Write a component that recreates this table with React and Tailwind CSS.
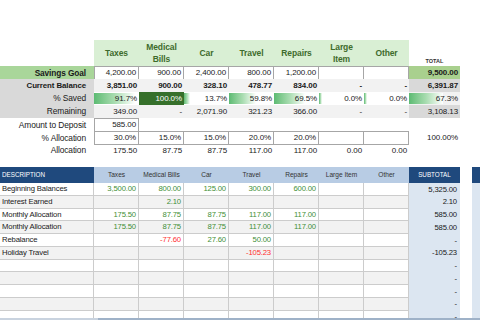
import React from 'react';

const COLS = 'grid grid-cols-[94px_repeat(7,45px)_51px_12px_1fr]';
const FONT = { fontFamily: '"Liberation Sans", Arial, sans-serif' };

const headers = [['Taxes'], ['Medical', 'Bills'], ['Car'], ['Travel'], ['Repairs'], ['Large', 'Item'], ['Other']];

function Num({ children, className = '' }) {
  return (
    <div className={`flex items-center justify-end pr-[2px] ${className}`}>{children}</div>
  );
}

function BarCell({ pct, text, className = '' }) {
  return (
    <div className={`relative flex items-center justify-end pr-[2px] ${className}`}>
      <div
        className="absolute left-0 top-[1px] bottom-[1px] min-w-[3px] bg-linear-to-r from-[#5cbb73] via-[#a8dcb0] to-white"
        style={{ width: `${pct}%` }}
      />
      <span className="relative">{text}</span>
    </div>
  );
}

const saved = [
  [91.7, '91.7%'],
  [100, '100.0%'],
  [13.7, '13.7%'],
  [59.8, '59.8%'],
  [69.5, '69.5%'],
  [0, '0.0%'],
  [0, '0.0%'],
];

const bottomHeaders = ['Taxes', 'Medical Bills', 'Car', 'Travel', 'Repairs', 'Large Item', 'Other'];

const alloc = [['175.50', 'g'], ['87.75', 'g'], ['87.75', 'g'], ['117.00', 'g'], ['117.00', 'g'], null, null];
const empty = [null, null, null, null, null, null, null];
const bottomRows = [
  { d: 'Beginning Balances', v: [['3,500.00', 'g'], ['800.00', 'g'], ['125.00', 'g'], ['300.00', 'g'], ['600.00', 'g'], null, null], s: '5,325.00' },
  { d: 'Interest Earned', v: [null, ['2.10', 'g'], null, null, null, null, null], s: '2.10' },
  { d: 'Monthly Allocation', v: alloc, s: '585.00' },
  { d: 'Monthly Allocation', v: alloc, s: '585.00' },
  { d: 'Rebalance', v: [null, ['-77.60', 'r'], ['27.60', 'g'], ['50.00', 'g'], null, null, null], s: '-' },
  { d: 'Holiday Travel', v: [null, null, null, ['-105.23', 'r'], null, null, null], s: '-105.23' },
  { d: '', v: empty, s: '-' },
  { d: '', v: empty, s: '-' },
  { d: '', v: empty, s: '-' },
  { d: '', v: empty, s: '-' },
  { d: '', v: empty, s: '-' },
];

export default function App() {
  return (
    <div className="w-[480px] h-[320px] overflow-hidden bg-white text-[#1a1a1a] flex flex-col" style={FONT}>
      {/* Top table */}
      <div className="mt-[40px] text-[8px] tracking-[-0.1px]">
        {/* header */}
        <div className={`${COLS} h-[26px]`}>
          <div />
          {headers.map((h, i) => (
            <div key={i} className="bg-[#d9efd4] flex flex-col items-center justify-center text-[8.5px] font-bold leading-[12px] text-[#3e6b2c]">
              {h.map((l) => (
                <span key={l}>{l}</span>
              ))}
            </div>
          ))}
          <div className="flex items-end justify-center pb-[1px] text-[5.5px] font-bold text-[#333] tracking-normal">TOTAL</div>
          <div />
          <div />
        </div>
        {/* Savings Goal */}
        <div className={`${COLS} h-[13px]`}>
          <div className="bg-[#a9d69a] flex items-center justify-end pr-[8px] font-bold text-[8.3px]">Savings Goal</div>
          {['4,200.00', '900.00', '2,400.00', '800.00', '1,200.00', '', ''].map((v, i) => (
            <Num key={i} className={`border-y border-r border-[#a6a6a6] ${i === 0 ? 'border-l' : ''}`}>{v}</Num>
          ))}
          <Num className="bg-[#a9d08e] font-bold">9,500.00</Num>
          <div />
          <div />
        </div>
        {/* Current Balance */}
        <div className={`${COLS} h-[13px]`}>
          <div className="bg-[#d9d9d9] flex items-center justify-end pr-[8px] font-bold text-[7.9px]">Current Balance</div>
          {['3,851.00', '900.00', '328.10', '478.77', '834.00', '-', '-'].map((v, i) => (
            <Num key={i} className="bg-[#f2f2f2] font-bold">{v}</Num>
          ))}
          <Num className="bg-[#d9d9d9] font-bold">6,391.87</Num>
          <div />
          <div />
        </div>
        {/* % Saved */}
        <div className={`${COLS} h-[13px]`}>
          <div className="bg-[#d9d9d9] flex items-center justify-end pr-[8px] text-[8.4px]">% Saved</div>
          {saved.map(([p, t], i) =>
            p === 100 ? (
              <Num key={i} className="bg-[#36702b] text-white">{t}</Num>
            ) : (
              <BarCell key={i} pct={p} text={t} />
            )
          )}
          <BarCell pct={67.3} text="67.3%" className="bg-[#f2f2f2]" />
          <div />
          <div />
        </div>
        {/* Remaining */}
        <div className={`${COLS} h-[13px]`}>
          <div className="bg-[#d9d9d9] flex items-center justify-end pr-[8px] text-[8.4px]">Remaining</div>
          {['349.00', '-', '2,071.90', '321.23', '366.00', '-', '-'].map((v, i) => (
            <Num key={i} className="bg-[#f2f2f2]">{v}</Num>
          ))}
          <Num className="bg-[#d9d9d9]">3,108.13</Num>
          <div />
          <div />
        </div>
        {/* Amount to Deposit */}
        <div className={`${COLS} h-[13px]`}>
          <div className="flex items-center justify-end pr-[8px] text-[8.4px]">Amount to Deposit</div>
          <Num className="border border-[#a6a6a6]">585.00</Num>
        </div>
        {/* % Allocation */}
        <div className={`${COLS} h-[13px]`}>
          <div className="flex items-center justify-end pr-[8px] text-[8.4px]">% Allocation</div>
          {['30.0%', '15.0%', '15.0%', '20.0%', '20.0%', '', ''].map((v, i) => (
            <Num key={i} className={`border-y border-r border-[#a6a6a6] ${i === 0 ? 'border-l' : ''}`}>{v}</Num>
          ))}
          <Num>100.00%</Num>
          <div />
          <div />
        </div>
        {/* Allocation */}
        <div className={`${COLS} h-[13px]`}>
          <div className="flex items-center justify-end pr-[8px] text-[8.4px]">Allocation</div>
          {['175.50', '87.75', '87.75', '117.00', '117.00', '0.00', '0.00'].map((v, i) => (
            <Num key={i}>{v}</Num>
          ))}
          <div />
          <div />
          <div />
        </div>
      </div>

      {/* Bottom table */}
      <div className="mt-[10px] h-[151px] overflow-hidden text-[7.7px] tracking-[-0.15px]">
        <div className={`${COLS} h-[16px]`}>
          <div className="bg-[#1f497d] text-white text-[6.3px] flex items-center pl-[2px] tracking-normal">DESCRIPTION</div>
          {bottomHeaders.map((h) => (
            <div key={h} className="bg-[#b8cce4] text-[#333] text-[6.6px] flex items-center justify-center tracking-normal">{h}</div>
          ))}
          <div className="bg-[#1f497d] text-white text-[6.3px] flex items-center justify-center tracking-normal">SUBTOTAL</div>
          <div />
          <div className="bg-[#1f497d]" />
        </div>
        {bottomRows.map((r, ri) => {
          const bg = ri % 2 === 1 ? 'bg-[#f2f2f2]' : 'bg-white';
          return (
            <div key={ri} className={`${COLS} h-[12.75px]`}>
              <div className={`${bg} border-b border-r border-[#cccccc] flex items-center pl-[2px]`}>{r.d}</div>
              {r.v.map((v, i) => (
                <div
                  key={i}
                  className={`${bg} border-b border-r border-[#cccccc] flex items-center justify-end pr-[2px] ${
                    v && v[1] === 'r' ? 'text-[#ff3030]' : 'text-[#3f8f36]'
                  }`}
                >
                  {v ? v[0] : ''}
                </div>
              ))}
              <div className="bg-[#dce6f1] flex items-center justify-end pr-[3px]">{r.s}</div>
              <div />
              <div className="bg-[#dce6f1]" />
            </div>
          );
        })}
      </div>
      <div className="flex h-[2px]">
        <div className="w-[98px] bg-[#c9d3df]" />
        <div className="flex-1 bg-[#9fb2c8]" />
      </div>
    </div>
  );
}
